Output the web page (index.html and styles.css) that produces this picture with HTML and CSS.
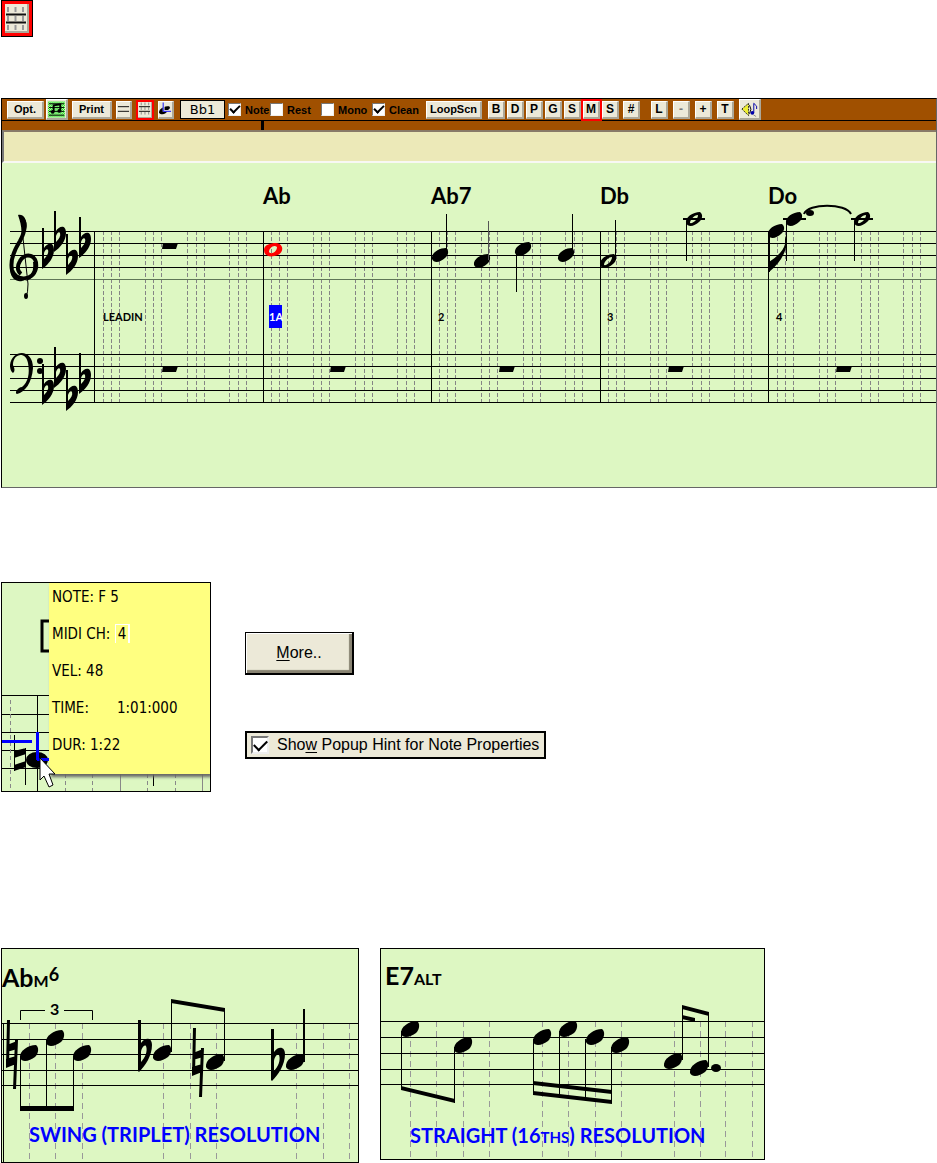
FILE: index.html
```html
<!DOCTYPE html>
<html lang="en">
<head>
<meta charset="utf-8">
<title>Notation Window</title>
<link rel="stylesheet" href="styles.css">
</head>
<body>
<svg class="defs" width="0" height="0" aria-hidden="true">
  <defs>
    <g id="head"><path d="M-8,4 C-9,-2 -1,-7 6,-7 C9,-5 9,0 5,3 C1,7 -6,9 -8,4Z"/></g>
    <g id="half"><path fill-rule="evenodd" d="M-8,4 C-9,-2 -1,-7 6,-7 C9,-5 9,0 5,3 C1,7 -6,9 -8,4Z M-4,4 C-1,5 4,0 4,-4 C0,-4 -4,1 -4,4Z"/></g>
    <g id="big"><path d="M-9,5 C-10,-2 -1,-8 7,-8 C10,-6 10,0 6,4 C1,8 -7,10 -9,5Z"/></g>
    <g id="flat"><path fill-rule="evenodd" d="M-1,0 V-40 H1 V-20 C4,-25 11,-27 11,-18 C11,-10 5,-3 -1,1Z M1,-9 C4,-12 6,-15 5,-18 C4,-20 1,-17 1,-14Z"/></g>
    <g id="flatBig"><path fill-rule="evenodd" d="M-1,0 V-51 H2 V-28 C6,-34 13,-34 13,-26 C13,-15 6,-5 0,1Z M2,-9 C6,-13 9,-20 7,-25 C5,-27 2,-22 2,-18Z"/></g>
    <g id="natural"><path d="M2,0 h3 l-1,47 h-3z M10,20 h3 l-2,49 h-3z M2,25 l10,-4 v8 l-10,3z M1,39 l10,-3 v8 l-10,4z"/></g>
    <g id="rest"><path d="M1,0 H16 L14,6 H0Z"/></g>
    <g id="keySig"><use href="#flat" x="43" y="268"/><use href="#flat" x="55" y="251"/><use href="#flat" x="67" y="274"/><use href="#flat" x="80" y="257"/></g>
    <path id="ticks" d="M9.500,231V402M17.500,231V402M25.500,231V402M51.500,231V402M59.500,231V402M67.500,231V402M93.500,231V402M102.500,231V402M110.500,231V402M135.500,231V402M144.500,231V402M152.500,231V402"/>
  </defs>
</svg>

<main class="page">
  <button class="grid-button" type="button" aria-label="Staff roll mode">
    <svg width="24" height="27" viewBox="0 0 24 27"><path d="M5,2V25M12.500,2V25M20,2V25" stroke="#999" stroke-width="2" stroke-dasharray="5 4"/><path d="M3,9.500H23M3,17.500H23" stroke="#111" stroke-width="2"/></svg>
  </button>

  <section class="notation" aria-label="Notation window">
    <div class="toolbar">
      <div class="group wide">
        <button class="btn opt" type="button">Opt.</button>
        <button class="btn icon tall" type="button" aria-label="Notation mode">
          <svg width="20" height="20" viewBox="0 0 20 20"><defs><pattern id="dots" width="2" height="2" patternUnits="userSpaceOnUse"><rect width="1" height="1" fill="#0e0"/><rect x="1" y="1" width="1" height="1" fill="#0e0"/></pattern></defs><rect x="1" y="2" width="18" height="17" fill="url(#dots)"/><path d="M2,4.500H18M2,8.500H18M2,12.500H18M2,16.500H18" stroke="#000"/><path d="M7,13V6L14,5V12" fill="none" stroke="#000" stroke-width="2"/><circle cx="6" cy="13" r="2"/><circle cx="13" cy="12" r="2"/></svg>
        </button>
      </div>
      <button class="btn print" type="button">Print</button>
      <div class="group modes">
        <button class="btn icon" type="button" aria-label="Staff lines"><svg width="14" height="16" viewBox="0 0 14 16"><path d="M1,5.500H13M1,10.500H13" stroke="#000"/></svg></button>
        <button class="btn icon active" type="button" aria-label="Staff roll"><svg width="14" height="16" viewBox="0 0 14 16"><path d="M3.500,1V15M7.500,1V15M11.500,1V15" stroke="#888" stroke-dasharray="3 2"/><path d="M1,5.500H13M1,10.500H13" stroke="#000"/></svg></button>
        <button class="btn icon" type="button" aria-label="Event entry"><svg width="14" height="16" viewBox="0 0 14 16"><path d="M0,12C0,7 6,5 11,5L12,7L9,10C8,14 2,15 0,12Z"/><path d="M4,1H6V9H13V11H4Z" fill="#ece9d8"/><path d="M4.500,1V10.500H13" fill="none" stroke="#00f"/></svg></button>
      </div>
      <output class="position">Bb1</output>
      <div class="group checks">
        <label class="check"><input type="checkbox" checked>Note</label>
        <label class="check"><input type="checkbox">Rest</label>
        <label class="check"><input type="checkbox">Mono</label>
        <label class="check"><input type="checkbox" checked>Clean</label>
      </div>
      <button class="btn loop" type="button">LoopScn</button>
      <div class="group parts">
        <button class="btn key" type="button">B</button><button class="btn key" type="button">D</button><button class="btn key" type="button">P</button><button class="btn key" type="button">G</button><button class="btn key" type="button">S</button><button class="btn key active" type="button">M</button><button class="btn key" type="button">S</button>
      </div>
      <button class="btn key" type="button">#</button>
      <div class="group tools">
        <button class="btn key" type="button">L</button><button class="btn key dim" type="button">-</button><button class="btn key" type="button">+</button><button class="btn key" type="button">T</button>
        <button class="btn icon tall" type="button" aria-label="Play notes"><svg width="20" height="20" viewBox="0 0 20 20"><path d="M2,10 L9,4 V17Z" fill="#ee3" stroke="#222" stroke-dasharray="2 1"/><path d="M10,6Q13,10 10,15" fill="none" stroke="#000"/><path d="M14.500,14V4L17.500,7V10" fill="none" stroke="#00a"/><circle cx="13" cy="14" r="2" fill="#00a"/><path d="M14,16l3,2" stroke="#888"/></svg></button>
      </div>
    </div>
    <div class="ruler"><span class="marker"></span></div>
    <div class="lyrics"></div>
    <svg class="score" viewBox="2 163 934 324" role="img" aria-label="Staff">
      <g fill="none" stroke="#858585" stroke-dasharray="4 2"><use href="#ticks" x="94"/><use href="#ticks" x="262"/><use href="#ticks" x="430"/><use href="#ticks" x="599"/><use href="#ticks" x="768"/></g>
      <g stroke="#000"><path d="M10,231.500H936M10,243.500H936M10,255.500H936M10,267.500H936M10,354.500H936M10,366.500H936M10,378.500H936M10,390.500H936M10,402.500H936"/><path d="M10,279.500H936" stroke="#5f7657"/><path d="M94.500,231V403M263.500,231V403M431.500,231V403M600.500,231V403M768.500,231V403"/></g>
      <!-- treble clef -->
      <path fill="none" stroke="#000" stroke-width="4" d="M21,218C26,221 26,230 20,241C13,252 10,261 12,270C15,281 33,282 36,268C38,254 25,252 20,261C17,266 17,271 21,274"/>
      <path d="M18,215C25,213 29,224 25,232L20,242C23,231 21,224 18,215ZM10,263C12,274 15,280 24,280C20,283 11,281 10,270ZM36,262C40,268 34,280 25,281C32,276 34,270 33,262Z"/>
      <path fill="none" stroke="#000" d="M23,238L28,284Q28,293 26,297"/><ellipse cx="26" cy="296" rx="2" ry="3"/>
      <use href="#keySig"/>
      <!-- bass clef -->
      <path d="M10,365C12,349 33,348 33,368C32,383 25,392 17,394C14,393 18,387 22,387C28,382 30,374 28,363C26,351 13,353 13,365Q16,371 13,373Q10,371 10,365Z"/><circle cx="40" cy="361" r="3"/><circle cx="40" cy="371" r="3"/>
      <use href="#keySig" y="136"/>
      <use href="#rest" x="162" y="243"/><use href="#rest" x="162" y="366"/><use href="#rest" x="330" y="366"/><use href="#rest" x="499" y="366"/><use href="#rest" x="668" y="366"/><use href="#rest" x="836" y="366"/>
      <path fill="#f00" fill-rule="evenodd" d="M264,250C264,245 270,243 276,243C284,244 284,252 278,255C270,258 264,256 264,250ZM269,252C271,255 277,252 277,247C274,244 269,248 269,252Z"/>
      <use href="#head" x="440" y="255"/><use href="#head" x="482" y="261"/><use href="#head" x="523" y="249"/><use href="#head" x="566" y="255"/><use href="#half" x="608" y="261"/>
      <use href="#half" x="694" y="219"/><use href="#head" x="776" y="231"/><use href="#head" x="794" y="219"/><use href="#half" x="862" y="219"/>
      <path stroke="#000" d="M446.500,214V254M516.500,251V292M572.500,214V254M615.500,220V260M686.500,221V261M786.500,221V261M854.500,221V261"/><path stroke="#555" d="M488.500,221V260"/>
      <path stroke="#000" stroke-width="2" d="M683,219H705M783,219H806M851,219H873M769,231V272"/>
      <path d="M769,262Q783,253 785,244L785,235L787,244Q784,260 769,272Z"/><ellipse cx="810" cy="213" rx="4" ry="3"/>
      <path fill="none" stroke="#000" stroke-width="2" d="M804,214C808,203 846,203 851,214"/>
      <g class="chord"><text x="263" y="204">Ab</text><text x="431" y="204">Ab7</text><text x="600" y="204">Db</text><text x="768" y="204">Do</text></g>
      <rect x="269" y="305" width="13" height="23" fill="#00f"/>
      <g class="bar-label"><text x="103" y="321">LEADIN</text><text x="269" y="321" class="selected">1A</text><text x="438" y="321">2</text><text x="607" y="321">3</text><text x="776" y="321">4</text></g>
    </svg>
  </section>

  <section class="hint-row">
    <div class="hint-shot">
      <svg viewBox="2 583 208 208" aria-hidden="true">
        <path fill="none" stroke="#000" stroke-width="3" d="M50,621H42V651H50"/>
        <path stroke="#000" d="M2,695.500H52M2,714.500H52M2,732.500H52M2,750.500H52M2,768.500H52M37.500,696V791M153.500,770V786"/>
        <path stroke="#888" stroke-dasharray="4 3" d="M10.500,700V791M65.500,774V791M92.500,774V791M147.500,774V791M175.500,774V791"/><path stroke="#888" d="M120.500,770V791M202.500,770V791"/>
        <path d="M14,735h1v36h-1zM25,748h1v37h-1zM14,751l12,-3v6l-12,4zM14,765l12,-4v6l-12,4z"/>
        <ellipse cx="37" cy="760" rx="11" ry="8"/>
        <path stroke="#00f" stroke-width="3" d="M2,741.500H32M37.500,732V760M37,759.500H52"/>
      </svg>
      <div class="hint">
        <p>NOTE: F 5</p><p>MIDI CH: <span class="channel">4</span></p><p>VEL: 48</p><p class="time"><span>TIME:</span><span>1:01:000</span></p><p>DUR: 1:22</p>
      </div>
      <svg class="cursor" width="18" height="34" viewBox="0 0 18 34" aria-hidden="true"><path d="M1,1V23L5,19L10,30L14,28L10,17H16Z" fill="#fff" stroke="#000"/></svg>
    </div>
    <div class="options">
      <button class="more" type="button"><span><u>M</u>ore..</span></button>
      <label class="popup-option"><input type="checkbox" checked><span>Sho<u>w</u> Popup Hint for Note Properties</span></label>
    </div>
  </section>

  <section class="examples">
    <svg class="swing" viewBox="1 948 358 215" role="img" aria-label="Swing resolution">
      <path stroke="#999" stroke-dasharray="6 4" d="M29.500,1023V1162M55.500,1023V1162M82.500,1023V1162M163.500,1023V1162M190.500,1023V1162M216.500,1023V1162M296.500,1023V1162M323.500,1023V1162M349.500,1023V1162"/>
      <path stroke="#000" d="M2,1023.500H358M2,1039.500H358M2,1054.500H358M2,1070.500H358M2,1085.500H358M3.500,1023V1162"/>
      <path fill="none" stroke="#000" d="M20.500,1020V1010.500H45M64,1010.500H92.500V1020M20.500,1056V1108M46.500,1040V1108M73.500,1056V1108M171.500,1000V1052M224.500,1008V1061"/>
      <path stroke="#000" stroke-width="2" d="M304,1009V1062"/><path d="M20,1106H74V1111H20ZM171,999L225,1008V1012L171,1003Z"/>
      <use href="#natural" x="5" y="1020"/><use href="#natural" x="191" y="1028"/><use href="#flatBig" x="139" y="1071"/><use href="#flatBig" x="272" y="1080"/>
      <use href="#big" x="29" y="1053"/><use href="#big" x="55" y="1038"/><use href="#big" x="82" y="1053"/><use href="#big" x="162" y="1053"/><use href="#big" x="215" y="1062"/><use href="#big" x="295" y="1062"/>
      <text class="big-chord" x="2" y="987">Ab<tspan class="sub">M</tspan><tspan class="sup" dy="-6">6</tspan></text>
      <text class="triplet" x="50" y="1015">3</text><text class="caption" x="29" y="1142">SWING (TRIPLET) RESOLUTION</text>
      <rect x="1.500" y="948.500" width="357" height="214" fill="none" stroke="#000"/>
    </svg>
    <svg class="straight" viewBox="380 948 385 212" role="img" aria-label="Straight resolution">
      <path stroke="#999" stroke-dasharray="6 4" d="M410.500,1021V1159M436.500,1021V1159M463.500,1021V1159M489.500,1021V1159M542.500,1021V1159M568.500,1021V1159M595.500,1021V1159M621.500,1021V1159M674.500,1021V1159M700.500,1021V1159M725.500,1021V1159M752.500,1021V1159"/>
      <path stroke="#000" d="M381,1021.500H764M381,1037.500H764M381,1053.500H764M381,1069.500H764M381,1084.500H764M401.500,1031V1089M454.500,1047V1103M533.500,1039V1095M559.500,1031V1097M585.500,1039V1100M611.500,1047V1103M682.500,1006V1060M708.500,1013V1067"/>
      <path d="M401,1086L455,1099V1103L401,1090ZM533,1081L612,1090V1094L533,1085ZM533,1091L612,1100V1104L533,1095ZM682,1005L709,1012V1016L682,1009ZM682,1015L695,1018V1022L682,1019Z"/>
      <use href="#big" x="410" y="1029"/><use href="#big" x="463" y="1045"/><use href="#big" x="542" y="1037"/><use href="#big" x="568" y="1029"/><use href="#big" x="595" y="1037"/><use href="#big" x="620" y="1045"/><use href="#big" x="673" y="1061"/><use href="#big" x="699" y="1068"/><ellipse cx="716" cy="1068" rx="5" ry="4"/>
      <text class="big-chord" x="385" y="985">E7<tspan class="sub">ALT</tspan></text><text class="caption" x="410" y="1143">STRAIGHT (16<tspan class="ths">THS</tspan>) RESOLUTION</text>
      <rect x="380.500" y="948.500" width="384" height="211" fill="none" stroke="#000"/>
    </svg>
  </section>
</main>
</body>
</html>
```
FILE: styles.css
```css
* { box-sizing: border-box; }
body { margin: 0; background: #fff; color: #000; font-family: "Liberation Sans", Arial, sans-serif; }
p { margin: 0; }
svg { display: block; }
.defs { position: absolute; }
button { font-family: inherit; color: #000; }
.page { display: flex; flex-direction: column; align-items: flex-start; padding-left: 1px; }

.grid-button { width: 32px; height: 37px; padding: 1px; background: #ece9d8; border: 1px solid #000; outline: 2px solid #f00; outline-offset: -4px; box-shadow: inset 0 0 0 3px #f00, inset -5px -5px 0 #aca899; }

.notation { align-self: stretch; margin-top: 61px; background: #ddf7c2; border: 1px solid #000; border-right-color: #666; border-bottom-color: #666; }
.toolbar { display: flex; align-items: center; gap: 4px; height: 21px; padding-left: 5px; background: #a05000; }
.group { display: flex; align-items: center; gap: 3px; }
.group.wide { gap: 2px; }
.modes { gap: 5px; }
.btn { flex: none; display: flex; align-items: center; justify-content: center; width: 17px; height: 18px; padding: 0; background: #ece9d8; border: 1px solid #fff; border-right: 2px solid #aca899; border-bottom: 2px solid #aca899; font-size: 11px; font-weight: bold; }
.modes .btn { width: 16px; }
.opt { width: 37px; }
.print { width: 40px; }
.loop { width: 56px; margin-right: 2px; }
.active { outline: 2px solid #f00; outline-offset: -1px; }
.key { font-size: 12px; }
.dim { color: #777; }
.position { width: 45px; height: 19px; margin-left: 2px; background: #ece9d8; border: 1px solid #000; font: 13px/18px "DejaVu Sans", sans-serif; text-align: center; }
.parts { gap: 2px; }
.parts .btn { width: 17px; }
.parts .active { outline-offset: 0; }
.tools { gap: 5px; margin-left: 7px; }
.btn.tall { width: 22px; height: 21px; }
.checks { gap: 1px; margin-left: -1px; }
.check { display: flex; align-items: center; gap: 4px; width: 41px; font-size: 11px; font-weight: bold; white-space: nowrap; }
.check + .check { width: 50px; }
input[type="checkbox"] { appearance: none; flex: none; width: 13px; height: 13px; margin: 0; background: #fff; border: 1px solid #777; border-right-color: #eee; border-bottom-color: #eee; display: grid; place-items: center; }
input[type="checkbox"]:checked::before { content: ""; width: 8px; height: 4px; margin-bottom: 3px; border-left: 2px solid #000; border-bottom: 2px solid #000; transform: rotate(-45deg); }
.ruler { height: 10px; padding-left: 259px; background: #a05000; border-top: 1px solid #000; }
.marker { display: block; width: 3px; height: 9px; background: #000; }
.lyrics { height: 33px; background: #ece9b8; border: 0 solid #777; border-top: 2px solid #887a68; border-left-width: 2px; border-bottom: 2px solid #f8f8f4; }
.score { width: 100%; height: auto; }
.chord { font: bold 22px Lato, "Liberation Sans", sans-serif; }
.bar-label { font: bold 11px Lato, "Liberation Sans", sans-serif; }
.selected { fill: #fff; }

.hint-row { display: flex; align-items: flex-start; gap: 34px; margin-top: 94px; }
.hint-shot { position: relative; width: 210px; overflow: hidden; background: #ddf7c2; border: 1px solid #000; }
.hint { position: absolute; left: 47px; top: 0; right: 0; display: grid; gap: 17px; padding: 4px 3px 19px; background: #ffff80; box-shadow: 2px 3px 3px #666; font: 15px/20px "DejaVu Sans Condensed", "DejaVu Sans", sans-serif; }
.channel { padding: 0 2px; border-left: 1px solid #fff; border-top: 1px solid #fff; border-right: 2px solid #fff; }
.time { display: flex; gap: 28px; }
.cursor { position: absolute; left: 37px; top: 174px; }
.options { display: flex; flex-direction: column; align-items: flex-start; gap: 56px; padding-top: 50px; }
.more { width: 109px; height: 43px; background: #ece9d8; border: 1px solid #000; border-right-width: 2px; border-bottom-width: 2px; box-shadow: inset 1px 1px 0 #fff, inset -3px -3px 1px #888372; font-size: 16px; }
.popup-option { display: flex; align-items: center; gap: 8px; width: 301px; height: 28px; padding-left: 4px; background: #ece9d8; border: 2px solid #000; font-size: 16px; white-space: nowrap; }
.popup-option input[type="checkbox"] { width: 18px; height: 18px; border-width: 2px; }
.popup-option input[type="checkbox"]:checked::before { width: 11px; height: 6px; }
u { text-underline-offset: 2px; }

.examples { display: flex; align-items: flex-start; gap: 21px; margin-top: 156px; }
.examples svg { background: #ddf7c2; }
.swing { width: 358px; }
.straight { width: 385px; }
.big-chord { font: bold 25px Lato, "Liberation Sans", sans-serif; }
.sub { font-size: 16px; }
.sup { font-size: 18px; }
.triplet { font: bold 16px Lato, "Liberation Sans", sans-serif; }
.caption { fill: #00f; font: bold 20px Lato, "Liberation Sans", sans-serif; }
.ths { font-size: 15px; }
```
